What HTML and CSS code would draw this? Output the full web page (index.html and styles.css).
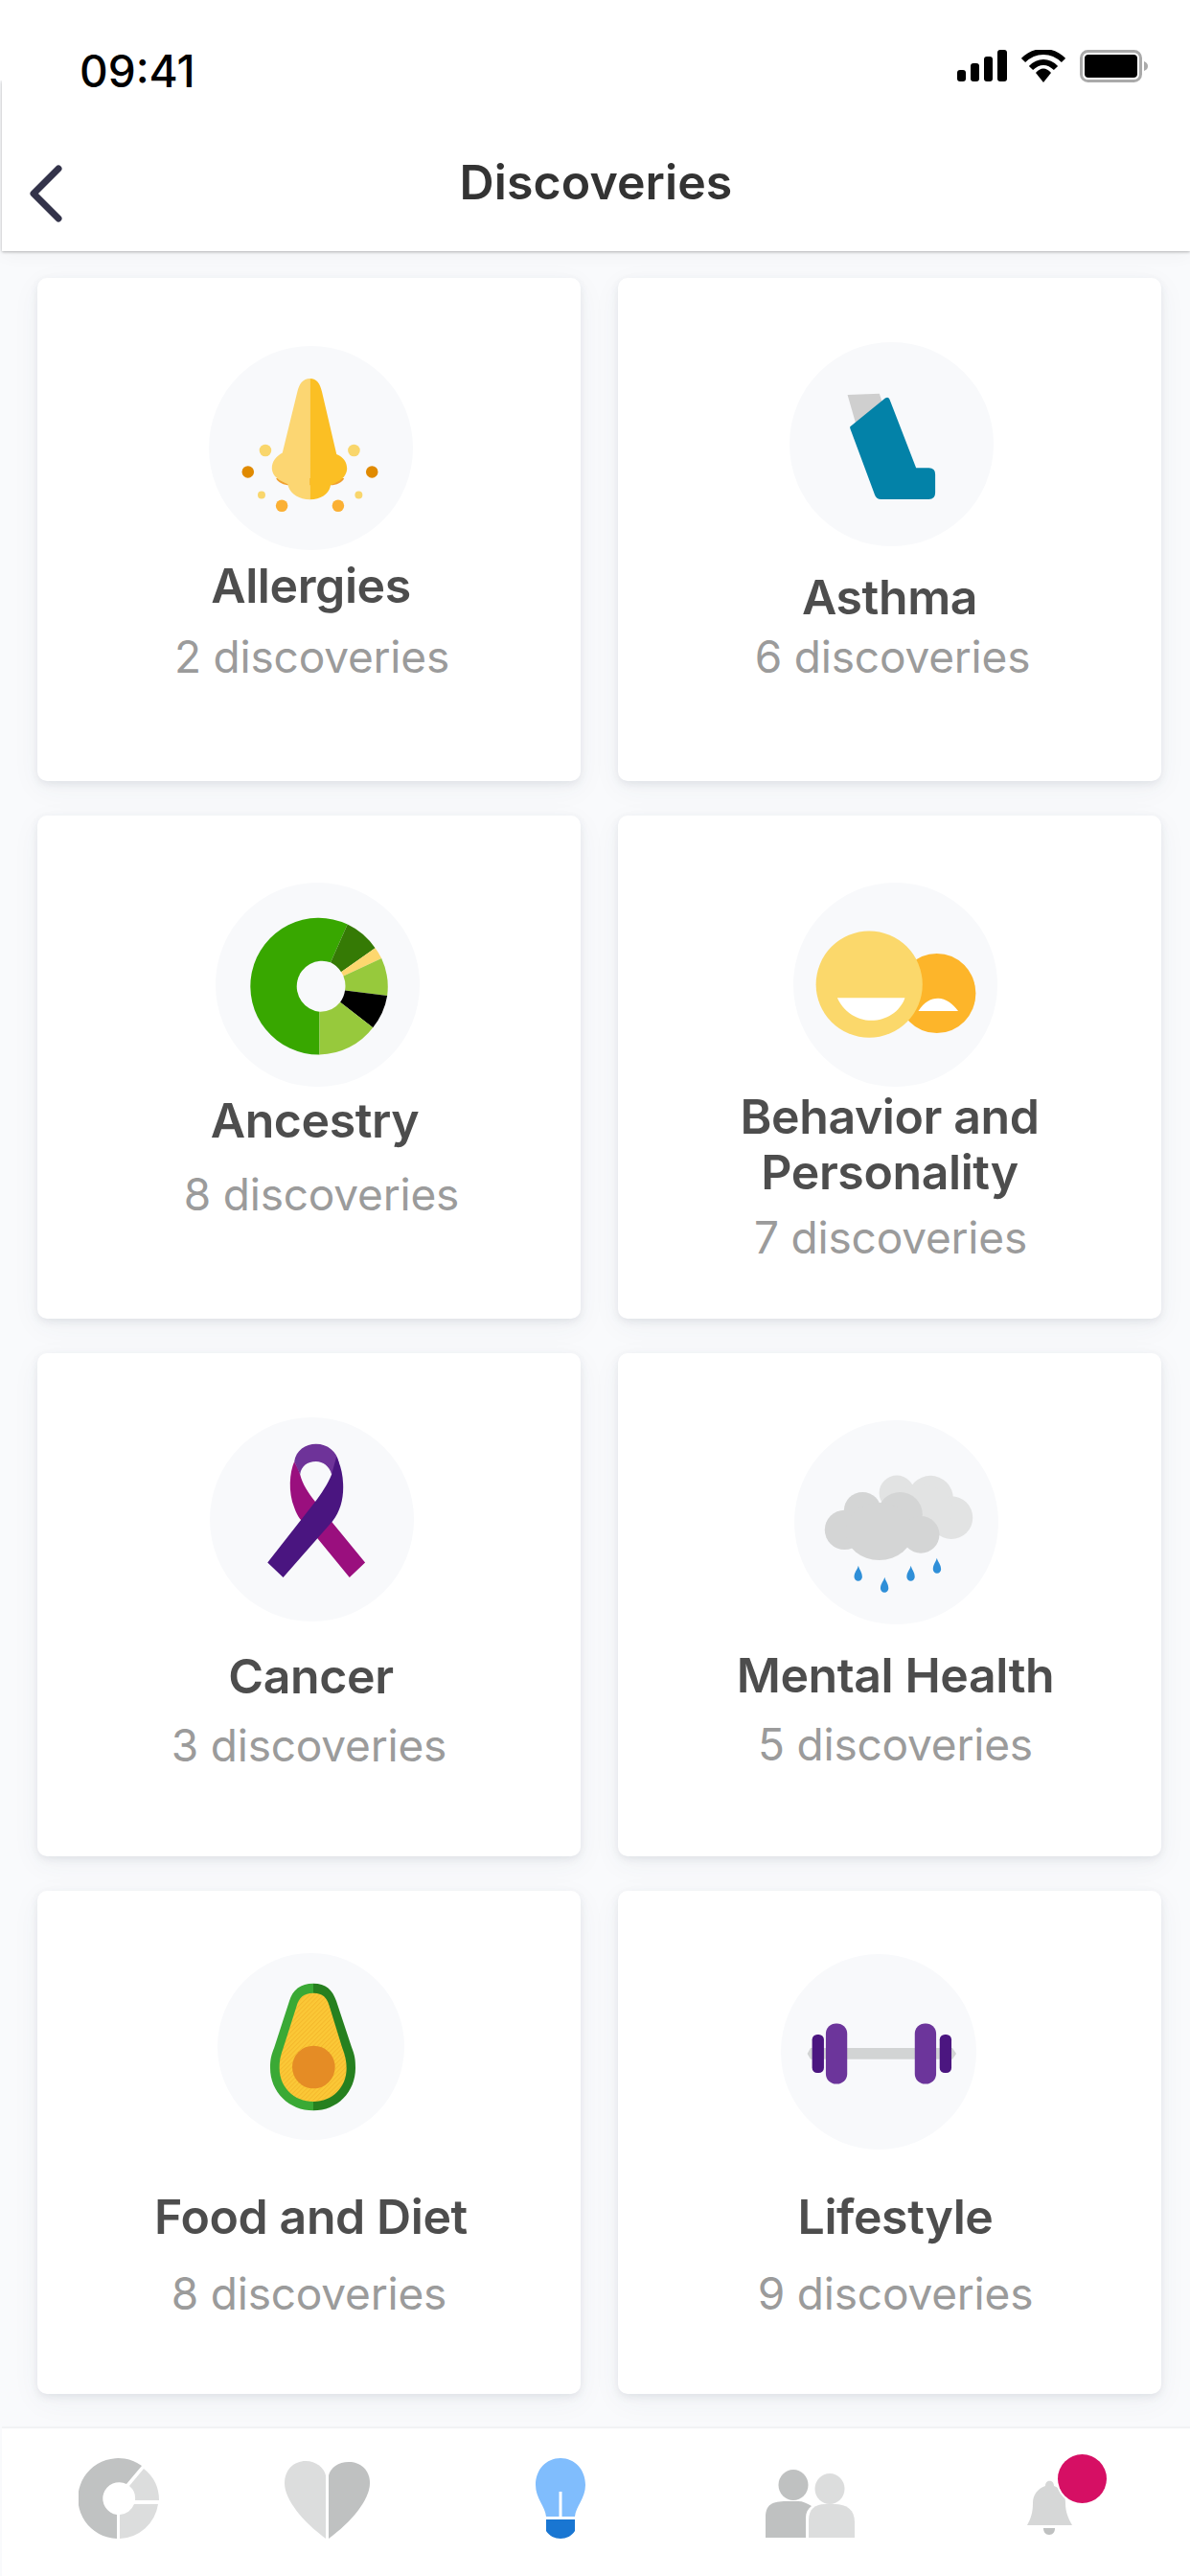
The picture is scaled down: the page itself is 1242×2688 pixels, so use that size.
FILE: index.html
```html
<!DOCTYPE html>
<html lang="en">
<head>
  <meta charset="UTF-8">
  <title>Discoveries</title>
  <link rel="stylesheet" href="styles.css">
</head>
<body>

<div class="status-bar">
  <span class="time">09:41</span>
  <div class="status-icons">
    <svg class="ic-signal" viewBox="0 0 52 33">
      <rect x="0" y="21" width="9" height="12" rx="3"/>
      <rect x="14" y="14" width="9" height="19" rx="3"/>
      <rect x="28" y="7" width="9" height="26" rx="3"/>
      <rect x="42" y="0" width="10" height="33" rx="3"/>
    </svg>
    <svg class="ic-wifi" viewBox="0 0 46 34">
      <path d="M2 11C14 -1 32 -1 44 11" fill="none" stroke="#000" stroke-width="6"/>
      <path d="M10 19C18 11 28 11 36 19" fill="none" stroke="#000" stroke-width="6"/>
      <path d="M15 24C20 18 26 18 31 24L23 34Z"/>
    </svg>
    <svg class="ic-battery" viewBox="0 0 71 34">
      <rect x="1.5" y="1.5" width="62" height="31" rx="7" fill="#fff" stroke="#aaa" stroke-width="3"/>
      <rect x="5" y="5" width="55" height="24" rx="4"/>
      <path d="M67 12C70 13 71 15 71 17C71 19 70 21 67 22Z" fill="#aaa"/>
    </svg>
  </div>
</div>

<header class="topbar">
  <svg class="back" viewBox="0 0 36 60">
    <path d="M31 4L5 30L31 56" fill="none" stroke="#33334a" stroke-width="7" stroke-linecap="round" stroke-linejoin="round"/>
  </svg>
  <h1>Discoveries</h1>
</header>

<main class="grid">

  <section class="card card-allergies">
    <div class="icon">
      <svg viewBox="115 60 640 645">
        <path d="M325 478C330 492 350 500 368 500L497 500C515 500 535 492 540 478Z" fill="#f0a030"/>
        <path d="M432 163C410 163 398 180 392 205L345 398C322 410 310 430 312 450C314 472 335 486 362 497C366 525 395 545 432 545Z" fill="#fcd672"/>
        <path d="M432 163C454 163 464 180 470 205L516 402C540 412 550 430 549 450C547 474 527 488 497 500C494 526 468 545 432 545Z" fill="#fbbf24"/>
        <circle cx="291" cy="390" r="19" fill="#f9d66c"/>
        <circle cx="571" cy="390" r="19" fill="#f9d66c"/>
        <circle cx="236" cy="458" r="19" fill="#e08a00"/>
        <circle cx="628" cy="458" r="19" fill="#e08a00"/>
        <circle cx="279" cy="531" r="12" fill="#f9d66c"/>
        <circle cx="586" cy="531" r="12" fill="#f9d66c"/>
        <circle cx="343" cy="565" r="19" fill="#fbb034"/>
        <circle cx="521" cy="565" r="19" fill="#fbb034"/>
      </svg>
    </div>
    <h2>Allergies</h2>
    <p>2 discoveries</p>
  </section>

  <section class="card card-asthma">
    <div class="icon">
      <svg viewBox="98 55 640 635">
        <path d="M280 218L380 214L390 245L305 305Z" fill="#cfcfcf"/>
        <path d="M288 318L398 228Q408 222 412 232L495 447L535 447Q555 447 555 467L555 525Q555 545 535 545L385 545Q370 545 365 530L290 328Q287 322 288 318Z" fill="#0382a8"/>
      </svg>
    </div>
    <h2>Asthma</h2>
    <p>6 discoveries</p>
  </section>

  <section class="card card-ancestry">
    <div class="icon">
      <svg viewBox="103 65 642 640">
        <path d="M430 605A215 215 0 1 1 518 195L465 315A80 80 0 1 0 430 470Z" fill="#38a700"/>
        <path d="M518 195A215 215 0 0 1 605 270L498 345A80 80 0 0 0 465 315Z" fill="#357a05"/>
        <path d="M605 270A215 215 0 0 1 625 302L505 358A80 80 0 0 0 498 345Z" fill="#fdd76f"/>
        <path d="M625 302A215 215 0 0 1 643 420L510 403A80 80 0 0 0 505 358Z" fill="#97c93c"/>
        <path d="M643 420A215 215 0 0 1 598 520L495 440A80 80 0 0 0 510 403Z" fill="#000"/>
        <path d="M598 520A215 215 0 0 1 430 605L430 470A80 80 0 0 0 495 440Z" fill="#97c93c"/>
      </svg>
    </div>
    <h2>Ancestry</h2>
    <p>8 discoveries</p>
  </section>

  <section class="card card-behavior">
    <div class="icon">
      <svg viewBox="80 65 640 640">
        <ellipse cx="530" cy="412" rx="122" ry="125" fill="#fdb52a"/>
        <path d="M472 468C490 440 510 428 534 428C558 428 580 445 597 468Z" fill="#fff"/>
        <circle cx="318" cy="384" r="167" fill="#fbd86b"/>
        <path d="M218 426L430 426C415 470 370 497 325 497C275 497 235 465 218 426Z" fill="#fff"/>
      </svg>
    </div>
    <h2>Behavior and<br>Personality</h2>
    <p>7 discoveries</p>
  </section>

  <section class="card card-cancer">
    <div class="icon">
      <svg viewBox="85 28 640 637">
        <path d="M350 165C335 200 330 260 350 310C360 340 375 355 385 360L523 528L572 482L415 290C395 265 375 235 368 205C362 185 352 170 350 165Z" fill="#9a0f7e"/>
        <path d="M350 165C355 130 385 110 418 110C455 110 485 135 490 170L467 205C460 180 440 165 418 165C390 165 372 180 368 205Z" fill="#6e3399"/>
        <path d="M467 205C455 235 435 265 415 292L266 482L315 528L470 352C495 320 505 280 503 235C502 205 495 175 482 150Z" fill="#4a1580"/>
      </svg>
    </div>
    <h2>Cancer</h2>
    <p>3 discoveries</p>
  </section>

  <section class="card card-mental">
    <div class="icon">
      <svg viewBox="85 38 637 637">
        <g fill="#e2e3e3">
          <circle cx="405" cy="265" r="55"/>
          <circle cx="510" cy="282" r="71"/>
          <circle cx="575" cy="342" r="67"/>
          <ellipse cx="480" cy="320" rx="100" ry="80"/>
        </g>
        <g fill="#d4d5d5">
          <circle cx="298" cy="320" r="58"/>
          <circle cx="415" cy="332" r="70"/>
          <circle cx="242" cy="380" r="62"/>
          <ellipse cx="350" cy="385" rx="105" ry="90"/>
          <circle cx="480" cy="395" r="58"/>
        </g>
        <g fill="#2f8fd8">
          <path d="M285 492C288 505 297 512 297 527A12.500 12.500 0 0 1 272 527C272 512 282 505 285 492Z"/>
          <path d="M367 528C370 541 379 548 379 563A12.500 12.500 0 0 1 354 563C354 548 364 541 367 528Z"/>
          <path d="M449 492C452 505 461 512 461 527A12.500 12.500 0 0 1 436 527C436 512 446 505 449 492Z"/>
          <path d="M530 468C533 481 543 488 543 503A12.500 12.500 0 0 1 518 503C518 488 527 481 530 468Z"/>
        </g>
      </svg>
    </div>
    <h2>Mental Health</h2>
    <p>5 discoveries</p>
  </section>

  <section class="card card-food">
    <div class="icon">
      <svg viewBox="80 25 585 585">
        <defs>
          <pattern id="flesh" width="10" height="10" patternUnits="userSpaceOnUse" patternTransform="rotate(-45)">
            <rect width="10" height="10" fill="#fbc837"/>
            <rect width="10" height="3" fill="#f5b82c"/>
          </pattern>
        </defs>
        <path d="M380 120C340 120 315 140 305 175L258 320C248 345 245 360 245 385C245 460 305 518 380 518Z" fill="#3aa935"/>
        <path d="M380 120C420 120 440 140 452 175L500 320C510 345 512 360 512 385C512 460 455 518 380 518Z" fill="#26801f"/>
        <path d="M380 150C350 150 335 165 328 190L285 325C276 350 274 365 274 385C274 445 320 490 380 490C440 490 484 445 484 385C484 365 480 345 470 320L430 190C423 165 410 150 380 150Z" fill="url(#flesh)"/>
        <circle cx="381" cy="382" r="67" fill="#e58c25"/>
      </svg>
    </div>
    <h2>Food and Diet</h2>
    <p>8 discoveries</p>
  </section>

  <section class="card card-lifestyle">
    <div class="icon">
      <svg viewBox="42 28 613 612">
        <path d="M125 340L135 322L580 322L592 340L580 357L135 357Z" fill="#d2d4d4"/>
        <rect x="140" y="280" width="37" height="120" rx="16" fill="#4b1680"/>
        <rect x="540" y="280" width="37" height="120" rx="16" fill="#4b1680"/>
        <rect x="183" y="245" width="67" height="190" rx="32" fill="#6c359b"/>
        <rect x="462" y="245" width="67" height="190" rx="32" fill="#6c359b"/>
      </svg>
    </div>
    <h2>Lifestyle</h2>
    <p>9 discoveries</p>
  </section>

</main>

<nav class="tabbar">
  <svg class="tab tab-donut" viewBox="0 0 84 84">
    <path d="M40 84A42 42 0 1 1 66 8L50 27A17 17 0 1 0 40 59Z" fill="#c0c2c2"/>
    <path d="M68 11A42 42 0 0 1 84 44L59 44A17 17 0 0 0 53 29Z" fill="#dcdddd"/>
    <path d="M83 48A42 42 0 0 1 43 84L43 59A17 17 0 0 0 58 48Z" fill="#dcdddd"/>
  </svg>
  <svg class="tab tab-heart" viewBox="0 0 89 84">
    <path d="M43 82C20 65 0 42 0 24C0 10 10 1 22 1C33 1 41 8 43 16Z" fill="#dcdddd"/>
    <path d="M46 82C69 65 89 42 89 24C89 10 79 2 67 2C56 2 48 8 46 16Z" fill="#bfc1c1"/>
  </svg>
  <svg class="tab tab-bulb" viewBox="0 0 52 84">
    <path d="M26 0C11 0 0 12 0 28C0 42 10 50 11 61L11 61L24.500 61L24.500 35L27.500 35L27.500 61L41 61C42 50 52 42 52 28C52 12 41 0 26 0Z" fill="#80bdfd"/>
    <path d="M11 64L41 64L41 76C38 81 32 84 26 84C20 84 14 81 11 76Z" fill="#1976d2"/>
  </svg>
  <svg class="tab tab-people" viewBox="0 0 93 73">
    <ellipse cx="29" cy="18" rx="15.500" ry="16" fill="#bfc1c1"/>
    <ellipse cx="67" cy="22" rx="15.500" ry="16" fill="#dcdddd"/>
    <path d="M0 73L0 52C0 36 10 35 24 35L34 35C39 35 43 37 48 40C44 43 42 47 42 52L42 73Z" fill="#bfc1c1"/>
    <path d="M45 73L45 55C45 43 52 38 62 38L72 38C85 38 93 44 93 57L93 73Z" fill="#dcdddd"/>
  </svg>
  <div class="bell-wrap">
    <svg class="tab tab-bell" viewBox="0 0 49 60">
      <path d="M20 9C20 2 29 2 29 9C37 12 41 18 41 27C41 36 44 43 48 50L1 50C5 43 7 36 7 27C7 18 12 12 20 9Z" fill="#d6d7d7"/>
      <path d="M18 53L30 53C30 57 28 60 24 60C20 60 18 57 18 53Z" fill="#bfc1c1"/>
    </svg>
    <span class="badge"></span>
  </div>
</nav>

</body>
</html>
```

FILE: styles.css
```css
body {
  margin: 0;
  width: 1242px;
  height: 2688px;
  overflow: hidden;
  display: flex;
  flex-direction: column;
  background: #f9fafc;
  font-family: Inter, "Liberation Sans", sans-serif;
}

/* status bar */
.status-bar {
  position: relative;
  z-index: 3;
  height: 84px;
  flex: none;
  background: #fff;
  display: flex;
  justify-content: space-between;
  align-items: flex-start;
  padding: 0 44px 0 83px;
  box-sizing: border-box;
}
.time {
  margin-top: 50px;
  font-size: 46px;
  line-height: 48px;
  font-weight: 500;
  color: #000;
}
.status-icons {
  display: flex;
  gap: 15px;
  margin-top: 52px;
}
.ic-signal {
  width: 52px;
  height: 33px;
}
.ic-wifi {
  width: 46px;
  height: 34px;
}
.ic-battery {
  width: 71px;
  height: 34px;
}

/* top bar */
.topbar {
  position: relative;
  z-index: 2;
  height: 178px;
  flex: none;
  margin-left: 2px;
  background: #fff;
  box-shadow: 0 1px 3px rgba(0, 0, 0, 0.28), 0 6px 18px rgba(0, 0, 0, 0.03);
}
.back {
  position: absolute;
  left: 28px;
  top: 88px;
  width: 36px;
  height: 60px;
}
.topbar h1 {
  margin: 0;
  padding-top: 76px;
  text-align: center;
  font-size: 50px;
  line-height: 60px;
  font-weight: 600;
  letter-spacing: 0.1px;
  color: #333;
}

/* cards */
.grid {
  flex: 1;
  display: grid;
  grid-template-columns: 567px 567px;
  grid-auto-rows: 525px;
  gap: 36px 39px;
  padding: 28px 0 0 39px;
}
.card {
  display: flex;
  flex-direction: column;
  align-items: center;
  box-sizing: border-box;
  padding-top: var(--pad);
  background: #fff;
  border-radius: 10px;
  box-shadow: 0 3px 8px rgba(60, 70, 90, 0.1), 0 8px 30px rgba(60, 70, 90, 0.05);
}
.icon {
  width: var(--size, 213px);
  height: var(--size, 213px);
  margin-left: var(--icon-x);
  flex: none;
  border-radius: 50%;
  background: #f8f9fb;
}
.icon svg {
  display: block;
  width: 100%;
  height: 100%;
}
.card h2 {
  margin: var(--title-top) 0 0 var(--title-x);
  text-align: center;
  font-size: 50px;
  line-height: 58px;
  font-weight: 600;
  letter-spacing: -0.4px;
  color: #4d4d4d;
}
.card p {
  margin: var(--sub-top) 0 0 var(--sub-x);
  font-size: 46px;
  line-height: 50px;
  letter-spacing: -0.2px;
  color: #9b9b9b;
}

/* the cards do not share one vertical rhythm, so each has its own spacing */
.card-allergies {
  --pad: 71px;
  --icon-x: 4px;
  --title-top: 8px;
  --title-x: 4px;
  --sub-top: 20px;
  --sub-x: 6px;
}
.card-asthma {
  --pad: 67px;
  --icon-x: 3px;
  --title-top: 24px;
  --title-x: 0;
  --sub-top: 8px;
  --sub-x: 6px;
}
.card-ancestry {
  --pad: 70px;
  --icon-x: 17px;
  --title-top: 6px;
  --title-x: 12px;
  --sub-top: 23px;
  --sub-x: 26px;
}
.card-behavior {
  --pad: 70px;
  --icon-x: 11px;
  --title-top: 2px;
  --title-x: 0;
  --sub-top: 14px;
  --sub-x: 2px;
}
.card-cancer {
  --pad: 67px;
  --icon-x: 5px;
  --title-top: 28px;
  --title-x: 4px;
  --sub-top: 18px;
  --sub-x: 0;
}
.card-mental {
  --pad: 70px;
  --icon-x: 14px;
  --title-top: 24px;
  --title-x: 12px;
  --sub-top: 18px;
  --sub-x: 12px;
}
.card-food {
  --pad: 65px;
  --size: 195px;
  --icon-x: 3px;
  --title-top: 51px;
  --title-x: 4px;
  --sub-top: 26px;
  --sub-x: 0;
}
.card-lifestyle {
  --pad: 66px;
  --size: 204px;
  --icon-x: -23px;
  --title-top: 41px;
  --title-x: 12px;
  --sub-top: 26px;
  --sub-x: 12px;
}

/* tab bar */
.tabbar {
  height: 156px;
  flex: none;
  margin-left: 2px;
  box-sizing: border-box;
  display: flex;
  align-items: flex-start;
  background: #fff;
  border-top: 2px solid #f1f2f4;
}
.tab {
  display: block;
  flex: none;
}
.tab-donut {
  width: 84px;
  height: 84px;
  margin: 31px 0 0 80px;
}
.tab-heart {
  width: 89px;
  height: 84px;
  margin: 33px 0 0 131px;
}
.tab-bulb {
  width: 52px;
  height: 84px;
  margin: 31px 0 0 173px;
}
.tab-people {
  width: 93px;
  height: 73px;
  margin: 41px 0 0 188px;
}
.bell-wrap {
  position: relative;
  margin: 51px 0 0 179px;
}
.tab-bell {
  width: 49px;
  height: 60px;
}
.badge {
  position: absolute;
  left: 33px;
  top: -24px;
  width: 51px;
  height: 51px;
  border-radius: 50%;
  background: #d60f64;
  box-shadow: 0 0 0 2px #fff;
}
```
